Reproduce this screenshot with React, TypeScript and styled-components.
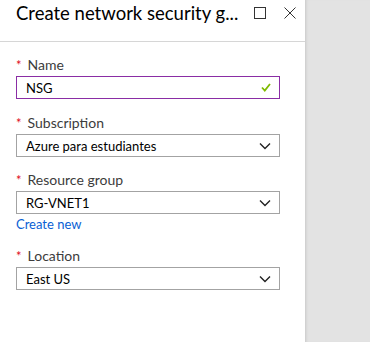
import React from "react";
import styled, { createGlobalStyle } from "styled-components";

const Global = createGlobalStyle`
  html, body { margin: 0; padding: 0; }
  body { font-family: Lato, "Open Sans", sans-serif; background: #e3e3e3; }
`;

const Page = styled.div`
  display: flex;
  width: 370px;
  height: 342px;
  overflow: hidden;
`;

const Panel = styled.div`
  width: 305px;
  height: 342px;
  background: #fff;
  display: flex;
  flex-direction: column;
  flex-shrink: 0;
`;

const Backdrop = styled.div`
  flex: 1;
  background: #e3e3e3;
  box-shadow: inset 3px 0 3px -2px rgba(0, 0, 0, 0.12);
`;

const Header = styled.div`
  height: 41px;
  border-bottom: 1px solid #d6d6d6;
  display: flex;
  align-items: flex-start;
  padding-left: 16px;
  padding-right: 9px;
  box-sizing: content-box;
`;

const Title = styled.h1`
  margin: 0;
  font-size: 18.5px;
  font-weight: 400;
  line-height: 26px;
  color: #000;
  white-space: nowrap;
`;

const HeaderButtons = styled.div`
  display: flex;
  gap: 18px;
  padding-top: 7px;
  margin-left: auto;
`;

const IconButton = styled.span`
  display: flex;
  width: 12px;
  height: 12px;
`;

const Form = styled.div`
  padding: 13px 25px 0 16px;
  display: flex;
  flex-direction: column;
`;

const Field = styled.div<{ $gap: number }>`
  display: flex;
  flex-direction: column;
  margin-bottom: ${(p) => p.$gap}px;
`;

const Label = styled.label`
  font-size: 14px;
  line-height: 20px;
  color: #3c3c3c;
  margin-bottom: 1px;
  display: flex;
  gap: 6px;
`;

const Star = styled.span`
  color: #e00b1c;
  font-size: 13px;
`;

const Box = styled.div<{ $focus?: boolean }>`
  height: 23px;
  box-sizing: border-box;
  border: 1px solid ${(p) => (p.$focus ? "#8a2da5" : "#a3a3a3")};
  display: flex;
  align-items: center;
  justify-content: space-between;
  padding: 0 8px 0 9px;
  font-size: 13px;
  color: #000;
`;

const Link = styled.a`
  font-size: 13px;
  line-height: 17px;
  color: #0a5fd4;
  margin-top: 2px;
`;

const Chevron = () => (
  <svg width="12" height="8" viewBox="0 0 12 8">
    <path d="M1 1.5 L6 6.5 L11 1.5" fill="none" stroke="#222" strokeWidth="1.4" />
  </svg>
);

const Check = () => (
  <svg width="10" height="9" viewBox="0 0 10 9">
    <path d="M1 4.5 L3.8 7.5 L9 1" fill="none" stroke="#7fba00" strokeWidth="1.8" />
  </svg>
);

export default function App() {
  return (
    <>
      <Global />
      <Page>
        <Panel>
          <Header>
            <Title>Create network security g...</Title>
            <HeaderButtons>
              <IconButton>
                <svg width="12" height="12" viewBox="0 0 12 12">
                  <rect x="0.5" y="0.5" width="11" height="11" fill="none" stroke="#333" strokeWidth="1" />
                </svg>
              </IconButton>
              <IconButton>
                <svg width="12" height="12" viewBox="0 0 12 12">
                  <path d="M0.5 0.5 L11.5 11.5 M11.5 0.5 L0.5 11.5" stroke="#333" strokeWidth="1" />
                </svg>
              </IconButton>
            </HeaderButtons>
          </Header>
          <Form>
            <Field $gap={14}>
              <Label><Star>*</Star>Name</Label>
              <Box $focus>NSG<Check /></Box>
            </Field>
            <Field $gap={13}>
              <Label><Star>*</Star>Subscription</Label>
              <Box>Azure para estudiantes<Chevron /></Box>
            </Field>
            <Field $gap={13}>
              <Label><Star>*</Star>Resource group</Label>
              <Box>RG-VNET1<Chevron /></Box>
              <Link>Create new</Link>
            </Field>
            <Field $gap={0}>
              <Label><Star>*</Star>Location</Label>
              <Box>East US<Chevron /></Box>
            </Field>
          </Form>
        </Panel>
        <Backdrop />
      </Page>
    </>
  );
}
